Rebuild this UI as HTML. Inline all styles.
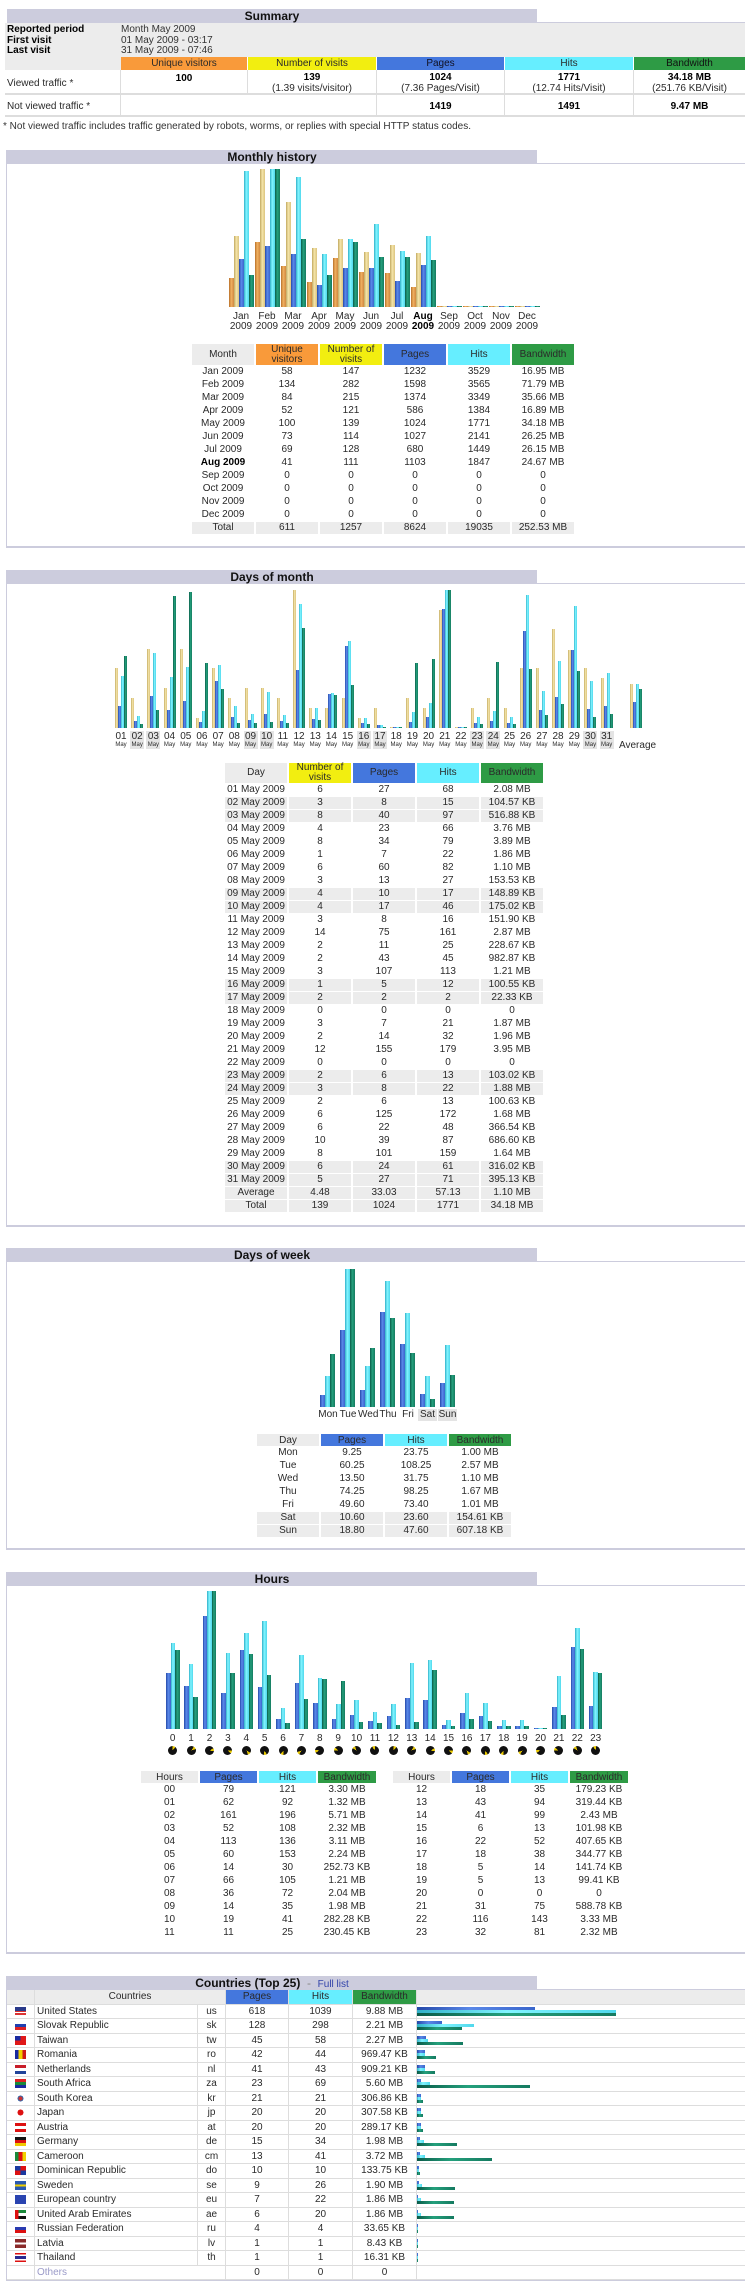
<!DOCTYPE html>
<html><head><meta charset="utf-8"><style>
*{margin:0;padding:0;box-sizing:border-box}
body{width:745px;height:2286px;position:relative;overflow:hidden;background:#fff;font-family:"Liberation Sans",sans-serif;font-size:10px;color:#2a2a2a}
.a{position:absolute}
.hd{position:absolute;left:7px;width:530px;height:14px;background:#CCCCDD;font-weight:bold;font-size:12px;line-height:14px;text-align:center;color:#111}
.box{position:absolute;left:6px;width:760px;border-left:1px solid #CCCCDD;border-bottom:2px solid #CCCCDD}
.hl{position:absolute;left:537px;width:210px;height:1px;background:#CCCCDD}
.ch{position:absolute;height:140px;display:flex;align-items:flex-end}
.ch div{display:flex;align-items:flex-end;flex:none}
.ch i{display:block;flex:none}
.u{background:linear-gradient(90deg,#b8702a,#f0b060 45%,#d08840)}
.v{background:linear-gradient(90deg,#c0a860,#f4e4a8 45%,#dcc480)}
.p{background:linear-gradient(90deg,#2448a8,#5a88e8 45%,#3a66cc)}
.h{background:linear-gradient(90deg,#30b0c8,#80f4ff 45%,#50d8ec)}
.k{background:linear-gradient(90deg,#0a5a48,#24a07c 45%,#157a60)}
.m i{width:5px}.d i{width:3px}.w i{width:5px}.hr i{width:4.5px}
table{position:absolute;border-collapse:separate;border-spacing:2px 1px}
td{padding:0;text-align:center;height:12px;line-height:12px;white-space:nowrap}
.g td,td.g{background:#ECECEC}
.cu{background:#F99A3A}.cv{background:#F2EE10}.cp{background:#4477DD}.chh{background:#66EEFF}.ck{background:#2E9B45}
.lab{position:absolute;display:flex;font-size:10px;text-align:center;line-height:10px}
.lab span{display:block;flex:none}
.sm{font-size:6px;line-height:7px;display:block}
.clk{width:9px;height:9px;border-radius:50%;margin:0 auto}
.ct td{border-right:1px solid #ddd;border-bottom:1px solid #ddd;height:14.5px;line-height:13px}
.fl{display:block;width:11px;height:9px;margin:0 auto}
</style></head><body>

<!-- SUMMARY -->
<div class="hd" style="top:9px">Summary</div>
<div class="hl" style="top:22px"></div>
<div class="a" style="left:5px;top:23px;width:740px;height:34px;background:#ECECEC"></div>
<div class="a" style="left:7px;top:25px;font-weight:bold;line-height:10.5px;color:#000">Reported period<br>First visit<br>Last visit</div>
<div class="a" style="left:121px;top:25px;line-height:10.5px;color:#333">Month May 2009<br>01 May 2009 - 03:17<br>31 May 2009 - 07:46</div>
<div class="a" style="left:5px;top:57px;width:116px;height:13px;background:#ECECEC"></div>
<div class="a cu" style="left:121px;top:57px;width:126px;height:13px;text-align:center;line-height:13px">Unique visitors</div>
<div class="a cv" style="left:248px;top:57px;width:128px;height:13px;text-align:center;line-height:13px">Number of visits</div>
<div class="a cp" style="left:377px;top:57px;width:127px;height:13px;text-align:center;line-height:13px;color:#112">Pages</div>
<div class="a chh" style="left:505px;top:57px;width:128px;height:13px;text-align:center;line-height:13px">Hits</div>
<div class="a ck" style="left:634px;top:57px;width:111px;height:13px;text-align:center;line-height:13px;color:#111">Bandwidth</div>
<div class="a" style="left:5px;top:70px;width:740px;height:47px;border-bottom:2px solid #ddd"></div>
<div class="a" style="left:5px;top:93px;width:740px;height:2px;background:#ddd"></div>
<div class="a" style="left:120px;top:70px;width:1px;height:47px;background:#ddd"></div>
<div class="a" style="left:376px;top:70px;width:1px;height:47px;background:#ddd"></div>
<div class="a" style="left:504px;top:70px;width:1px;height:47px;background:#ddd"></div>
<div class="a" style="left:633px;top:70px;width:1px;height:47px;background:#ddd"></div>
<div class="a" style="left:247px;top:70px;width:1px;height:23px;background:#ddd"></div>
<div class="a" style="left:7px;top:78px">Viewed traffic *</div>
<div class="a" style="left:7px;top:101px">Not viewed traffic *</div>
<div class="a" style="left:121px;top:73px;width:126px;text-align:center;font-weight:bold;color:#000">100</div>
<div class="a" style="left:248px;top:73px;width:128px;text-align:center;line-height:10.5px"><b style="color:#000">139</b><br>(1.39 visits/visitor)</div>
<div class="a" style="left:377px;top:73px;width:127px;text-align:center;line-height:10.5px"><b style="color:#000">1024</b><br>(7.36 Pages/Visit)</div>
<div class="a" style="left:505px;top:73px;width:128px;text-align:center;line-height:10.5px"><b style="color:#000">1771</b><br>(12.74 Hits/Visit)</div>
<div class="a" style="left:634px;top:73px;width:111px;text-align:center;line-height:10.5px"><b style="color:#000">34.18 MB</b><br>(251.76 KB/Visit)</div>
<div class="a" style="left:377px;top:101px;width:127px;text-align:center;font-weight:bold;color:#000">1419</div>
<div class="a" style="left:505px;top:101px;width:128px;text-align:center;font-weight:bold;color:#000">1491</div>
<div class="a" style="left:634px;top:101px;width:111px;text-align:center;font-weight:bold;color:#000">9.47 MB</div>
<div class="a" style="left:3px;top:121px;color:#333">* Not viewed traffic includes traffic generated by robots, worms, or replies with special HTTP status codes.</div>

<!-- MONTHLY -->
<div class="box" style="top:150px;height:398px"></div>
<div class="hd" style="top:150px">Monthly history</div>
<div class="hl" style="top:163px"></div>
<div class="ch m" style="left:229px;top:167px">
<div style="width:26px"><i class="u" style="height:29px"></i><i class="v" style="height:71px"></i><i class="p" style="height:48px"></i><i class="h" style="height:136px"></i><i class="k" style="height:32px"></i></div>
<div style="width:26px"><i class="u" style="height:65px"></i><i class="v" style="height:138px"></i><i class="p" style="height:61px"></i><i class="h" style="height:138px"></i><i class="k" style="height:138px"></i></div>
<div style="width:26px"><i class="u" style="height:41px"></i><i class="v" style="height:105px"></i><i class="p" style="height:53px"></i><i class="h" style="height:130px"></i><i class="k" style="height:68px"></i></div>
<div style="width:26px"><i class="u" style="height:25px"></i><i class="v" style="height:59px"></i><i class="p" style="height:22px"></i><i class="h" style="height:53px"></i><i class="k" style="height:32px"></i></div>
<div style="width:26px"><i class="u" style="height:49px"></i><i class="v" style="height:68px"></i><i class="p" style="height:39px"></i><i class="h" style="height:68px"></i><i class="k" style="height:65px"></i></div>
<div style="width:26px"><i class="u" style="height:35px"></i><i class="v" style="height:55px"></i><i class="p" style="height:39px"></i><i class="h" style="height:83px"></i><i class="k" style="height:50px"></i></div>
<div style="width:26px"><i class="u" style="height:34px"></i><i class="v" style="height:62px"></i><i class="p" style="height:26px"></i><i class="h" style="height:56px"></i><i class="k" style="height:50px"></i></div>
<div style="width:26px"><i class="u" style="height:20px"></i><i class="v" style="height:54px"></i><i class="p" style="height:42px"></i><i class="h" style="height:71px"></i><i class="k" style="height:47px"></i></div>
<div style="width:26px"><i class="u" style="height:1px"></i><i class="v" style="height:1px"></i><i class="p" style="height:1px"></i><i class="h" style="height:1px"></i><i class="k" style="height:1px"></i></div>
<div style="width:26px"><i class="u" style="height:1px"></i><i class="v" style="height:1px"></i><i class="p" style="height:1px"></i><i class="h" style="height:1px"></i><i class="k" style="height:1px"></i></div>
<div style="width:26px"><i class="u" style="height:1px"></i><i class="v" style="height:1px"></i><i class="p" style="height:1px"></i><i class="h" style="height:1px"></i><i class="k" style="height:1px"></i></div>
<div style="width:26px"><i class="u" style="height:1px"></i><i class="v" style="height:1px"></i><i class="p" style="height:1px"></i><i class="h" style="height:1px"></i><i class="k" style="height:1px"></i></div>
</div>
<div class="lab" style="left:228px;top:312px">
<span style="width:26px">Jan<br>2009</span><span style="width:26px">Feb<br>2009</span><span style="width:26px">Mar<br>2009</span><span style="width:26px">Apr<br>2009</span><span style="width:26px">May<br>2009</span><span style="width:26px">Jun<br>2009</span><span style="width:26px">Jul<br>2009</span><span style="width:26px;font-weight:bold;color:#000">Aug<br>2009</span><span style="width:26px">Sep<br>2009</span><span style="width:26px">Oct<br>2009</span><span style="width:26px">Nov<br>2009</span><span style="width:26px">Dec<br>2009</span>
</div>
<table style="left:190px;top:343px">
<tr><td class="g" style="width:62px;height:21px">Month</td><td class="cu" style="width:62px;line-height:10px">Unique<br>visitors</td><td class="cv" style="width:62px;line-height:10px">Number of<br>visits</td><td class="cp" style="width:62px">Pages</td><td class="chh" style="width:62px">Hits</td><td class="ck" style="width:62px">Bandwidth</td></tr>
<tr><td>Jan 2009</td><td>58</td><td>147</td><td>1232</td><td>3529</td><td>16.95 MB</td></tr>
<tr><td>Feb 2009</td><td>134</td><td>282</td><td>1598</td><td>3565</td><td>71.79 MB</td></tr>
<tr><td>Mar 2009</td><td>84</td><td>215</td><td>1374</td><td>3349</td><td>35.66 MB</td></tr>
<tr><td>Apr 2009</td><td>52</td><td>121</td><td>586</td><td>1384</td><td>16.89 MB</td></tr>
<tr><td>May 2009</td><td>100</td><td>139</td><td>1024</td><td>1771</td><td>34.18 MB</td></tr>
<tr><td>Jun 2009</td><td>73</td><td>114</td><td>1027</td><td>2141</td><td>26.25 MB</td></tr>
<tr><td>Jul 2009</td><td>69</td><td>128</td><td>680</td><td>1449</td><td>26.15 MB</td></tr>
<tr><td style="font-weight:bold;color:#000">Aug 2009</td><td>41</td><td>111</td><td>1103</td><td>1847</td><td>24.67 MB</td></tr>
<tr><td>Sep 2009</td><td>0</td><td>0</td><td>0</td><td>0</td><td>0</td></tr>
<tr><td>Oct 2009</td><td>0</td><td>0</td><td>0</td><td>0</td><td>0</td></tr>
<tr><td>Nov 2009</td><td>0</td><td>0</td><td>0</td><td>0</td><td>0</td></tr>
<tr><td>Dec 2009</td><td>0</td><td>0</td><td>0</td><td>0</td><td>0</td></tr>
<tr class="g"><td>Total</td><td>611</td><td>1257</td><td>8624</td><td>19035</td><td>252.53 MB</td></tr>
</table>

<!-- DAYS OF MONTH -->
<div class="box" style="top:570px;height:657px"></div>
<div class="hd" style="top:570px">Days of month</div>
<div class="hl" style="top:583px"></div>
<div class="ch d" style="left:115px;top:588px">
<div style="width:16.2px"><i class="v" style="height:60px"></i><i class="p" style="height:22px"></i><i class="h" style="height:52px"></i><i class="k" style="height:72px"></i></div>
<div style="width:16.2px"><i class="v" style="height:30px"></i><i class="p" style="height:7px"></i><i class="h" style="height:12px"></i><i class="k" style="height:4px"></i></div>
<div style="width:16.2px"><i class="v" style="height:79px"></i><i class="p" style="height:32px"></i><i class="h" style="height:75px"></i><i class="k" style="height:18px"></i></div>
<div style="width:16.2px"><i class="v" style="height:40px"></i><i class="p" style="height:18px"></i><i class="h" style="height:51px"></i><i class="k" style="height:132px"></i></div>
<div style="width:16.2px"><i class="v" style="height:79px"></i><i class="p" style="height:27px"></i><i class="h" style="height:61px"></i><i class="k" style="height:136px"></i></div>
<div style="width:16.2px"><i class="v" style="height:10px"></i><i class="p" style="height:6px"></i><i class="h" style="height:17px"></i><i class="k" style="height:65px"></i></div>
<div style="width:16.2px"><i class="v" style="height:60px"></i><i class="p" style="height:47px"></i><i class="h" style="height:63px"></i><i class="k" style="height:39px"></i></div>
<div style="width:16.2px"><i class="v" style="height:30px"></i><i class="p" style="height:11px"></i><i class="h" style="height:22px"></i><i class="k" style="height:5px"></i></div>
<div style="width:16.2px"><i class="v" style="height:40px"></i><i class="p" style="height:8px"></i><i class="h" style="height:14px"></i><i class="k" style="height:5px"></i></div>
<div style="width:16.2px"><i class="v" style="height:40px"></i><i class="p" style="height:14px"></i><i class="h" style="height:36px"></i><i class="k" style="height:6px"></i></div>
<div style="width:16.2px"><i class="v" style="height:30px"></i><i class="p" style="height:7px"></i><i class="h" style="height:13px"></i><i class="k" style="height:5px"></i></div>
<div style="width:16.2px"><i class="v" style="height:138px"></i><i class="p" style="height:58px"></i><i class="h" style="height:124px"></i><i class="k" style="height:100px"></i></div>
<div style="width:16.2px"><i class="v" style="height:20px"></i><i class="p" style="height:9px"></i><i class="h" style="height:20px"></i><i class="k" style="height:8px"></i></div>
<div style="width:16.2px"><i class="v" style="height:20px"></i><i class="p" style="height:34px"></i><i class="h" style="height:35px"></i><i class="k" style="height:33px"></i></div>
<div style="width:16.2px"><i class="v" style="height:30px"></i><i class="p" style="height:82px"></i><i class="h" style="height:87px"></i><i class="k" style="height:43px"></i></div>
<div style="width:16.2px"><i class="v" style="height:10px"></i><i class="p" style="height:5px"></i><i class="h" style="height:10px"></i><i class="k" style="height:4px"></i></div>
<div style="width:16.2px"><i class="v" style="height:20px"></i><i class="p" style="height:3px"></i><i class="h" style="height:3px"></i><i class="k" style="height:1px"></i></div>
<div style="width:16.2px"><i class="v" style="height:1px"></i><i class="p" style="height:1px"></i><i class="h" style="height:1px"></i><i class="k" style="height:1px"></i></div>
<div style="width:16.2px"><i class="v" style="height:30px"></i><i class="p" style="height:6px"></i><i class="h" style="height:16px"></i><i class="k" style="height:65px"></i></div>
<div style="width:16.2px"><i class="v" style="height:20px"></i><i class="p" style="height:11px"></i><i class="h" style="height:25px"></i><i class="k" style="height:69px"></i></div>
<div style="width:16.2px"><i class="v" style="height:118px"></i><i class="p" style="height:119px"></i><i class="h" style="height:138px"></i><i class="k" style="height:138px"></i></div>
<div style="width:16.2px"><i class="v" style="height:1px"></i><i class="p" style="height:1px"></i><i class="h" style="height:1px"></i><i class="k" style="height:1px"></i></div>
<div style="width:16.2px"><i class="v" style="height:20px"></i><i class="p" style="height:5px"></i><i class="h" style="height:11px"></i><i class="k" style="height:4px"></i></div>
<div style="width:16.2px"><i class="v" style="height:30px"></i><i class="p" style="height:7px"></i><i class="h" style="height:17px"></i><i class="k" style="height:66px"></i></div>
<div style="width:16.2px"><i class="v" style="height:20px"></i><i class="p" style="height:5px"></i><i class="h" style="height:11px"></i><i class="k" style="height:4px"></i></div>
<div style="width:16.2px"><i class="v" style="height:60px"></i><i class="p" style="height:97px"></i><i class="h" style="height:133px"></i><i class="k" style="height:59px"></i></div>
<div style="width:16.2px"><i class="v" style="height:60px"></i><i class="p" style="height:18px"></i><i class="h" style="height:37px"></i><i class="k" style="height:13px"></i></div>
<div style="width:16.2px"><i class="v" style="height:99px"></i><i class="p" style="height:31px"></i><i class="h" style="height:67px"></i><i class="k" style="height:24px"></i></div>
<div style="width:16.2px"><i class="v" style="height:78px"></i><i class="p" style="height:78px"></i><i class="h" style="height:122px"></i><i class="k" style="height:57px"></i></div>
<div style="width:16.2px"><i class="v" style="height:60px"></i><i class="p" style="height:19px"></i><i class="h" style="height:47px"></i><i class="k" style="height:11px"></i></div>
<div style="width:16.2px"><i class="v" style="height:50px"></i><i class="p" style="height:22px"></i><i class="h" style="height:55px"></i><i class="k" style="height:14px"></i></div>
<div style="width:16.2px;margin-left:13px"><i class="v" style="height:44px"></i><i class="p" style="height:26px"></i><i class="h" style="height:44px"></i><i class="k" style="height:39px"></i></div>
</div>
<div class="lab" style="left:114px;top:731px;line-height:11px">
<span style="width:16.2px"><span style="width:14px">01<b class="sm" style="font-weight:normal">May</b></span></span>
<span style="width:16.2px"><span style="width:14px;background:#e4e4e4">02<b class="sm" style="font-weight:normal">May</b></span></span>
<span style="width:16.2px"><span style="width:14px;background:#e4e4e4">03<b class="sm" style="font-weight:normal">May</b></span></span>
<span style="width:16.2px"><span style="width:14px">04<b class="sm" style="font-weight:normal">May</b></span></span>
<span style="width:16.2px"><span style="width:14px">05<b class="sm" style="font-weight:normal">May</b></span></span>
<span style="width:16.2px"><span style="width:14px">06<b class="sm" style="font-weight:normal">May</b></span></span>
<span style="width:16.2px"><span style="width:14px">07<b class="sm" style="font-weight:normal">May</b></span></span>
<span style="width:16.2px"><span style="width:14px">08<b class="sm" style="font-weight:normal">May</b></span></span>
<span style="width:16.2px"><span style="width:14px;background:#e4e4e4">09<b class="sm" style="font-weight:normal">May</b></span></span>
<span style="width:16.2px"><span style="width:14px;background:#e4e4e4">10<b class="sm" style="font-weight:normal">May</b></span></span>
<span style="width:16.2px"><span style="width:14px">11<b class="sm" style="font-weight:normal">May</b></span></span>
<span style="width:16.2px"><span style="width:14px">12<b class="sm" style="font-weight:normal">May</b></span></span>
<span style="width:16.2px"><span style="width:14px">13<b class="sm" style="font-weight:normal">May</b></span></span>
<span style="width:16.2px"><span style="width:14px">14<b class="sm" style="font-weight:normal">May</b></span></span>
<span style="width:16.2px"><span style="width:14px">15<b class="sm" style="font-weight:normal">May</b></span></span>
<span style="width:16.2px"><span style="width:14px;background:#e4e4e4">16<b class="sm" style="font-weight:normal">May</b></span></span>
<span style="width:16.2px"><span style="width:14px;background:#e4e4e4">17<b class="sm" style="font-weight:normal">May</b></span></span>
<span style="width:16.2px"><span style="width:14px">18<b class="sm" style="font-weight:normal">May</b></span></span>
<span style="width:16.2px"><span style="width:14px">19<b class="sm" style="font-weight:normal">May</b></span></span>
<span style="width:16.2px"><span style="width:14px">20<b class="sm" style="font-weight:normal">May</b></span></span>
<span style="width:16.2px"><span style="width:14px">21<b class="sm" style="font-weight:normal">May</b></span></span>
<span style="width:16.2px"><span style="width:14px">22<b class="sm" style="font-weight:normal">May</b></span></span>
<span style="width:16.2px"><span style="width:14px;background:#e4e4e4">23<b class="sm" style="font-weight:normal">May</b></span></span>
<span style="width:16.2px"><span style="width:14px;background:#e4e4e4">24<b class="sm" style="font-weight:normal">May</b></span></span>
<span style="width:16.2px"><span style="width:14px">25<b class="sm" style="font-weight:normal">May</b></span></span>
<span style="width:16.2px"><span style="width:14px">26<b class="sm" style="font-weight:normal">May</b></span></span>
<span style="width:16.2px"><span style="width:14px">27<b class="sm" style="font-weight:normal">May</b></span></span>
<span style="width:16.2px"><span style="width:14px">28<b class="sm" style="font-weight:normal">May</b></span></span>
<span style="width:16.2px"><span style="width:14px">29<b class="sm" style="font-weight:normal">May</b></span></span>
<span style="width:16.2px"><span style="width:14px;background:#e4e4e4">30<b class="sm" style="font-weight:normal">May</b></span></span>
<span style="width:16.2px"><span style="width:14px;background:#e4e4e4">31<b class="sm" style="font-weight:normal">May</b></span></span>
</div>
<div class="a" style="left:619px;top:740px">Average</div>
<table style="left:223px;top:762px">
<tr><td class="g" style="width:62px;height:20px">Day</td><td class="cv" style="width:62px;line-height:10px">Number of<br>visits</td><td class="cp" style="width:62px">Pages</td><td class="chh" style="width:62px">Hits</td><td class="ck" style="width:62px">Bandwidth</td></tr>
<tr><td>01 May 2009</td><td>6</td><td>27</td><td>68</td><td>2.08 MB</td></tr>
<tr class="g"><td>02 May 2009</td><td>3</td><td>8</td><td>15</td><td>104.57 KB</td></tr>
<tr class="g"><td>03 May 2009</td><td>8</td><td>40</td><td>97</td><td>516.88 KB</td></tr>
<tr><td>04 May 2009</td><td>4</td><td>23</td><td>66</td><td>3.76 MB</td></tr>
<tr><td>05 May 2009</td><td>8</td><td>34</td><td>79</td><td>3.89 MB</td></tr>
<tr><td>06 May 2009</td><td>1</td><td>7</td><td>22</td><td>1.86 MB</td></tr>
<tr><td>07 May 2009</td><td>6</td><td>60</td><td>82</td><td>1.10 MB</td></tr>
<tr><td>08 May 2009</td><td>3</td><td>13</td><td>27</td><td>153.53 KB</td></tr>
<tr class="g"><td>09 May 2009</td><td>4</td><td>10</td><td>17</td><td>148.89 KB</td></tr>
<tr class="g"><td>10 May 2009</td><td>4</td><td>17</td><td>46</td><td>175.02 KB</td></tr>
<tr><td>11 May 2009</td><td>3</td><td>8</td><td>16</td><td>151.90 KB</td></tr>
<tr><td>12 May 2009</td><td>14</td><td>75</td><td>161</td><td>2.87 MB</td></tr>
<tr><td>13 May 2009</td><td>2</td><td>11</td><td>25</td><td>228.67 KB</td></tr>
<tr><td>14 May 2009</td><td>2</td><td>43</td><td>45</td><td>982.87 KB</td></tr>
<tr><td>15 May 2009</td><td>3</td><td>107</td><td>113</td><td>1.21 MB</td></tr>
<tr class="g"><td>16 May 2009</td><td>1</td><td>5</td><td>12</td><td>100.55 KB</td></tr>
<tr class="g"><td>17 May 2009</td><td>2</td><td>2</td><td>2</td><td>22.33 KB</td></tr>
<tr><td>18 May 2009</td><td>0</td><td>0</td><td>0</td><td>0</td></tr>
<tr><td>19 May 2009</td><td>3</td><td>7</td><td>21</td><td>1.87 MB</td></tr>
<tr><td>20 May 2009</td><td>2</td><td>14</td><td>32</td><td>1.96 MB</td></tr>
<tr><td>21 May 2009</td><td>12</td><td>155</td><td>179</td><td>3.95 MB</td></tr>
<tr><td>22 May 2009</td><td>0</td><td>0</td><td>0</td><td>0</td></tr>
<tr class="g"><td>23 May 2009</td><td>2</td><td>6</td><td>13</td><td>103.02 KB</td></tr>
<tr class="g"><td>24 May 2009</td><td>3</td><td>8</td><td>22</td><td>1.88 MB</td></tr>
<tr><td>25 May 2009</td><td>2</td><td>6</td><td>13</td><td>100.63 KB</td></tr>
<tr><td>26 May 2009</td><td>6</td><td>125</td><td>172</td><td>1.68 MB</td></tr>
<tr><td>27 May 2009</td><td>6</td><td>22</td><td>48</td><td>366.54 KB</td></tr>
<tr><td>28 May 2009</td><td>10</td><td>39</td><td>87</td><td>686.60 KB</td></tr>
<tr><td>29 May 2009</td><td>8</td><td>101</td><td>159</td><td>1.64 MB</td></tr>
<tr class="g"><td>30 May 2009</td><td>6</td><td>24</td><td>61</td><td>316.02 KB</td></tr>
<tr class="g"><td>31 May 2009</td><td>5</td><td>27</td><td>71</td><td>395.13 KB</td></tr>
<tr class="g"><td>Average</td><td>4.48</td><td>33.03</td><td>57.13</td><td>1.10 MB</td></tr>
<tr class="g"><td>Total</td><td>139</td><td>1024</td><td>1771</td><td>34.18 MB</td></tr>
</table>

<!-- DAYS OF WEEK -->
<div class="box" style="top:1248px;height:302px"></div>
<div class="hd" style="top:1248px">Days of week</div>
<div class="hl" style="top:1261px"></div>
<div class="ch w" style="left:320px;top:1267px">
<div style="width:20px"><i class="p" style="height:12px"></i><i class="h" style="height:31px"></i><i class="k" style="height:53px"></i></div>
<div style="width:20px"><i class="p" style="height:77px"></i><i class="h" style="height:138px"></i><i class="k" style="height:138px"></i></div>
<div style="width:20px"><i class="p" style="height:17px"></i><i class="h" style="height:41px"></i><i class="k" style="height:59px"></i></div>
<div style="width:20px"><i class="p" style="height:95px"></i><i class="h" style="height:126px"></i><i class="k" style="height:89px"></i></div>
<div style="width:20px"><i class="p" style="height:63px"></i><i class="h" style="height:94px"></i><i class="k" style="height:54px"></i></div>
<div style="width:20px"><i class="p" style="height:13px"></i><i class="h" style="height:31px"></i><i class="k" style="height:8px"></i></div>
<div style="width:20px"><i class="p" style="height:24px"></i><i class="h" style="height:62px"></i><i class="k" style="height:32px"></i></div>
</div>
<div class="lab" style="left:318px;top:1409px;line-height:12px">
<span style="width:20px">Mon</span><span style="width:20px">Tue</span><span style="width:20px">Wed</span><span style="width:20px">Thu</span><span style="width:20px">Fri</span><span style="width:19px;background:#e4e4e4;margin-right:1px">Sat</span><span style="width:19px;background:#e4e4e4">Sun</span>
</div>
<table style="left:255px;top:1433px">
<tr><td class="g" style="width:62px;height:11px;line-height:11px">Day</td><td class="cp" style="width:62px;line-height:11px">Pages</td><td class="chh" style="width:62px;line-height:11px">Hits</td><td class="ck" style="width:62px;line-height:11px">Bandwidth</td></tr>
<tr><td>Mon</td><td>9.25</td><td>23.75</td><td>1.00 MB</td></tr>
<tr><td>Tue</td><td>60.25</td><td>108.25</td><td>2.57 MB</td></tr>
<tr><td>Wed</td><td>13.50</td><td>31.75</td><td>1.10 MB</td></tr>
<tr><td>Thu</td><td>74.25</td><td>98.25</td><td>1.67 MB</td></tr>
<tr><td>Fri</td><td>49.60</td><td>73.40</td><td>1.01 MB</td></tr>
<tr class="g"><td>Sat</td><td>10.60</td><td>23.60</td><td>154.61 KB</td></tr>
<tr class="g"><td>Sun</td><td>18.80</td><td>47.60</td><td>607.18 KB</td></tr>
</table>

<!-- HOURS -->
<div class="box" style="top:1572px;height:382px"></div>
<div class="hd" style="top:1572px">Hours</div>
<div class="hl" style="top:1585px"></div>
<div class="ch hr" style="left:166px;top:1589px">
<div style="width:18.4px"><i class="p" style="height:56px"></i><i class="h" style="height:86px"></i><i class="k" style="height:79px"></i></div>
<div style="width:18.4px"><i class="p" style="height:43px"></i><i class="h" style="height:65px"></i><i class="k" style="height:32px"></i></div>
<div style="width:18.4px"><i class="p" style="height:113px"></i><i class="h" style="height:138px"></i><i class="k" style="height:138px"></i></div>
<div style="width:18.4px"><i class="p" style="height:36px"></i><i class="h" style="height:76px"></i><i class="k" style="height:56px"></i></div>
<div style="width:18.4px"><i class="p" style="height:79px"></i><i class="h" style="height:96px"></i><i class="k" style="height:75px"></i></div>
<div style="width:18.4px"><i class="p" style="height:42px"></i><i class="h" style="height:108px"></i><i class="k" style="height:54px"></i></div>
<div style="width:18.4px"><i class="p" style="height:10px"></i><i class="h" style="height:21px"></i><i class="k" style="height:6px"></i></div>
<div style="width:18.4px"><i class="p" style="height:46px"></i><i class="h" style="height:74px"></i><i class="k" style="height:30px"></i></div>
<div style="width:18.4px"><i class="p" style="height:26px"></i><i class="h" style="height:51px"></i><i class="k" style="height:50px"></i></div>
<div style="width:18.4px"><i class="p" style="height:10px"></i><i class="h" style="height:25px"></i><i class="k" style="height:48px"></i></div>
<div style="width:18.4px"><i class="p" style="height:14px"></i><i class="h" style="height:29px"></i><i class="k" style="height:7px"></i></div>
<div style="width:18.4px"><i class="p" style="height:8px"></i><i class="h" style="height:17px"></i><i class="k" style="height:6px"></i></div>
<div style="width:18.4px"><i class="p" style="height:13px"></i><i class="h" style="height:25px"></i><i class="k" style="height:4px"></i></div>
<div style="width:18.4px"><i class="p" style="height:31px"></i><i class="h" style="height:66px"></i><i class="k" style="height:7px"></i></div>
<div style="width:18.4px"><i class="p" style="height:29px"></i><i class="h" style="height:69px"></i><i class="k" style="height:59px"></i></div>
<div style="width:18.4px"><i class="p" style="height:4px"></i><i class="h" style="height:9px"></i><i class="k" style="height:3px"></i></div>
<div style="width:18.4px"><i class="p" style="height:16px"></i><i class="h" style="height:36px"></i><i class="k" style="height:10px"></i></div>
<div style="width:18.4px"><i class="p" style="height:13px"></i><i class="h" style="height:26px"></i><i class="k" style="height:8px"></i></div>
<div style="width:18.4px"><i class="p" style="height:3px"></i><i class="h" style="height:9px"></i><i class="k" style="height:3px"></i></div>
<div style="width:18.4px"><i class="p" style="height:3px"></i><i class="h" style="height:9px"></i><i class="k" style="height:3px"></i></div>
<div style="width:18.4px"><i class="p" style="height:1px"></i><i class="h" style="height:1px"></i><i class="k" style="height:1px"></i></div>
<div style="width:18.4px"><i class="p" style="height:22px"></i><i class="h" style="height:53px"></i><i class="k" style="height:14px"></i></div>
<div style="width:18.4px"><i class="p" style="height:82px"></i><i class="h" style="height:101px"></i><i class="k" style="height:80px"></i></div>
<div style="width:18.4px"><i class="p" style="height:23px"></i><i class="h" style="height:57px"></i><i class="k" style="height:56px"></i></div>
</div>
<div class="lab" style="left:166px;top:1733px;line-height:11px">
<span style="width:18.4px;padding-right:5px">0</span><span style="width:18.4px;padding-right:5px">1</span><span style="width:18.4px;padding-right:5px">2</span><span style="width:18.4px;padding-right:5px">3</span><span style="width:18.4px;padding-right:5px">4</span><span style="width:18.4px;padding-right:5px">5</span><span style="width:18.4px;padding-right:5px">6</span><span style="width:18.4px;padding-right:5px">7</span><span style="width:18.4px;padding-right:5px">8</span><span style="width:18.4px;padding-right:5px">9</span><span style="width:18.4px;padding-right:5px">10</span><span style="width:18.4px;padding-right:5px">11</span><span style="width:18.4px;padding-right:5px">12</span><span style="width:18.4px;padding-right:5px">13</span><span style="width:18.4px;padding-right:5px">14</span><span style="width:18.4px;padding-right:5px">15</span><span style="width:18.4px;padding-right:5px">16</span><span style="width:18.4px;padding-right:5px">17</span><span style="width:18.4px;padding-right:5px">18</span><span style="width:18.4px;padding-right:5px">19</span><span style="width:18.4px;padding-right:5px">20</span><span style="width:18.4px;padding-right:5px">21</span><span style="width:18.4px;padding-right:5px">22</span><span style="width:18.4px;padding-right:5px">23</span>
</div>
<div class="lab" style="left:166px;top:1746px">
<span style="width:18.4px;padding-right:5px"><i class="clk" style="display:block;background:conic-gradient(from 0deg,#e8c800 0 40deg,#111 40deg)"></i></span>
<span style="width:18.4px;padding-right:5px"><i class="clk" style="display:block;background:conic-gradient(from 30deg,#e8c800 0 40deg,#111 40deg)"></i></span>
<span style="width:18.4px;padding-right:5px"><i class="clk" style="display:block;background:conic-gradient(from 60deg,#e8c800 0 40deg,#111 40deg)"></i></span>
<span style="width:18.4px;padding-right:5px"><i class="clk" style="display:block;background:conic-gradient(from 90deg,#e8c800 0 40deg,#111 40deg)"></i></span>
<span style="width:18.4px;padding-right:5px"><i class="clk" style="display:block;background:conic-gradient(from 120deg,#e8c800 0 40deg,#111 40deg)"></i></span>
<span style="width:18.4px;padding-right:5px"><i class="clk" style="display:block;background:conic-gradient(from 150deg,#e8c800 0 40deg,#111 40deg)"></i></span>
<span style="width:18.4px;padding-right:5px"><i class="clk" style="display:block;background:conic-gradient(from 180deg,#e8c800 0 40deg,#111 40deg)"></i></span>
<span style="width:18.4px;padding-right:5px"><i class="clk" style="display:block;background:conic-gradient(from 210deg,#e8c800 0 40deg,#111 40deg)"></i></span>
<span style="width:18.4px;padding-right:5px"><i class="clk" style="display:block;background:conic-gradient(from 240deg,#e8c800 0 40deg,#111 40deg)"></i></span>
<span style="width:18.4px;padding-right:5px"><i class="clk" style="display:block;background:conic-gradient(from 270deg,#e8c800 0 40deg,#111 40deg)"></i></span>
<span style="width:18.4px;padding-right:5px"><i class="clk" style="display:block;background:conic-gradient(from 300deg,#e8c800 0 40deg,#111 40deg)"></i></span>
<span style="width:18.4px;padding-right:5px"><i class="clk" style="display:block;background:conic-gradient(from 330deg,#e8c800 0 40deg,#111 40deg)"></i></span>
<span style="width:18.4px;padding-right:5px"><i class="clk" style="display:block;background:conic-gradient(from 0deg,#e8c800 0 40deg,#111 40deg)"></i></span>
<span style="width:18.4px;padding-right:5px"><i class="clk" style="display:block;background:conic-gradient(from 30deg,#e8c800 0 40deg,#111 40deg)"></i></span>
<span style="width:18.4px;padding-right:5px"><i class="clk" style="display:block;background:conic-gradient(from 60deg,#e8c800 0 40deg,#111 40deg)"></i></span>
<span style="width:18.4px;padding-right:5px"><i class="clk" style="display:block;background:conic-gradient(from 90deg,#e8c800 0 40deg,#111 40deg)"></i></span>
<span style="width:18.4px;padding-right:5px"><i class="clk" style="display:block;background:conic-gradient(from 120deg,#e8c800 0 40deg,#111 40deg)"></i></span>
<span style="width:18.4px;padding-right:5px"><i class="clk" style="display:block;background:conic-gradient(from 150deg,#e8c800 0 40deg,#111 40deg)"></i></span>
<span style="width:18.4px;padding-right:5px"><i class="clk" style="display:block;background:conic-gradient(from 180deg,#e8c800 0 40deg,#111 40deg)"></i></span>
<span style="width:18.4px;padding-right:5px"><i class="clk" style="display:block;background:conic-gradient(from 210deg,#e8c800 0 40deg,#111 40deg)"></i></span>
<span style="width:18.4px;padding-right:5px"><i class="clk" style="display:block;background:conic-gradient(from 240deg,#e8c800 0 40deg,#111 40deg)"></i></span>
<span style="width:18.4px;padding-right:5px"><i class="clk" style="display:block;background:conic-gradient(from 270deg,#e8c800 0 40deg,#111 40deg)"></i></span>
<span style="width:18.4px;padding-right:5px"><i class="clk" style="display:block;background:conic-gradient(from 300deg,#e8c800 0 40deg,#111 40deg)"></i></span>
<span style="width:18.4px;padding-right:5px"><i class="clk" style="display:block;background:conic-gradient(from 330deg,#e8c800 0 40deg,#111 40deg)"></i></span>
</div>
<table style="left:139px;top:1770px">
<tr><td class="g" style="width:57px;height:11px;line-height:11px">Hours</td><td class="cp" style="width:57px;line-height:11px">Pages</td><td class="chh" style="width:57px;line-height:11px">Hits</td><td class="ck" style="width:58px;line-height:11px">Bandwidth</td></tr>
<tr><td>00</td><td>79</td><td>121</td><td>3.30 MB</td></tr>
<tr><td>01</td><td>62</td><td>92</td><td>1.32 MB</td></tr>
<tr><td>02</td><td>161</td><td>196</td><td>5.71 MB</td></tr>
<tr><td>03</td><td>52</td><td>108</td><td>2.32 MB</td></tr>
<tr><td>04</td><td>113</td><td>136</td><td>3.11 MB</td></tr>
<tr><td>05</td><td>60</td><td>153</td><td>2.24 MB</td></tr>
<tr><td>06</td><td>14</td><td>30</td><td>252.73 KB</td></tr>
<tr><td>07</td><td>66</td><td>105</td><td>1.21 MB</td></tr>
<tr><td>08</td><td>36</td><td>72</td><td>2.04 MB</td></tr>
<tr><td>09</td><td>14</td><td>35</td><td>1.98 MB</td></tr>
<tr><td>10</td><td>19</td><td>41</td><td>282.28 KB</td></tr>
<tr><td>11</td><td>11</td><td>25</td><td>230.45 KB</td></tr>
</table>
<table style="left:391px;top:1770px">
<tr><td class="g" style="width:57px;height:11px;line-height:11px">Hours</td><td class="cp" style="width:57px;line-height:11px">Pages</td><td class="chh" style="width:57px;line-height:11px">Hits</td><td class="ck" style="width:58px;line-height:11px">Bandwidth</td></tr>
<tr><td>12</td><td>18</td><td>35</td><td>179.23 KB</td></tr>
<tr><td>13</td><td>43</td><td>94</td><td>319.44 KB</td></tr>
<tr><td>14</td><td>41</td><td>99</td><td>2.43 MB</td></tr>
<tr><td>15</td><td>6</td><td>13</td><td>101.98 KB</td></tr>
<tr><td>16</td><td>22</td><td>52</td><td>407.65 KB</td></tr>
<tr><td>17</td><td>18</td><td>38</td><td>344.77 KB</td></tr>
<tr><td>18</td><td>5</td><td>14</td><td>141.74 KB</td></tr>
<tr><td>19</td><td>5</td><td>13</td><td>99.41 KB</td></tr>
<tr><td>20</td><td>0</td><td>0</td><td>0</td></tr>
<tr><td>21</td><td>31</td><td>75</td><td>588.78 KB</td></tr>
<tr><td>22</td><td>116</td><td>143</td><td>3.33 MB</td></tr>
<tr><td>23</td><td>32</td><td>81</td><td>2.32 MB</td></tr>
</table>

<!-- COUNTRIES -->
<div class="box" style="top:1976px;height:305px"></div>
<div class="hd" style="top:1976px">Countries (Top 25) &nbsp;<span style="color:#888;font-weight:normal">-</span>&nbsp; <span style="color:#3344aa;font-weight:normal;font-size:10px">Full list</span></div>
<div class="hl" style="top:1989px"></div>
<table class="ct" style="left:7px;top:1990px;border-spacing:0;width:740px">
<tr><td class="g" style="width:28px;height:14px;line-height:13px"></td><td class="g" colspan="2" style="width:191px">Countries</td><td class="cp" style="width:63px">Pages</td><td class="chh" style="width:64px">Hits</td><td class="ck" style="width:64px">Bandwidth</td><td class="g"></td></tr>
<tr><td><i class="fl" style="background:linear-gradient(#2a3a8a 0 45%,transparent 45%),repeating-linear-gradient(#d33 0 2px,#fff 2px 3px)"></i></td><td style="text-align:left;padding-left:2px;width:163px">United States</td><td style="width:28px">us</td><td>618</td><td>1039</td><td>9.88 MB</td><td style="text-align:left"><i style="display:block;height:3px;width:118px" class="p"></i><i style="display:block;height:3px;width:199px" class="h"></i><i style="display:block;height:3px;width:199px" class="k"></i></td></tr>
<tr><td><i class="fl" style="background:linear-gradient(#fff 0 33%,#2040b0 33% 66%,#d22 66%)"></i></td><td style="text-align:left;padding-left:2px">Slovak Republic</td><td>sk</td><td>128</td><td>298</td><td>2.21 MB</td><td style="text-align:left"><i style="display:block;height:3px;width:25px" class="p"></i><i style="display:block;height:3px;width:57px" class="h"></i><i style="display:block;height:3px;width:45px" class="k"></i></td></tr>
<tr><td><i class="fl" style="background:linear-gradient(90deg,#1a2aa0 0 50%,transparent 50%) top/100% 50% no-repeat,#e01818"></i></td><td style="text-align:left;padding-left:2px">Taiwan</td><td>tw</td><td>45</td><td>58</td><td>2.27 MB</td><td style="text-align:left"><i style="display:block;height:3px;width:9px" class="p"></i><i style="display:block;height:3px;width:11px" class="h"></i><i style="display:block;height:3px;width:46px" class="k"></i></td></tr>
<tr><td><i class="fl" style="background:linear-gradient(90deg,#1a2aa0 0 33%,#f0d000 33% 66%,#d01818 66%)"></i></td><td style="text-align:left;padding-left:2px">Romania</td><td>ro</td><td>42</td><td>44</td><td>969.47 KB</td><td style="text-align:left"><i style="display:block;height:3px;width:8px" class="p"></i><i style="display:block;height:3px;width:8px" class="h"></i><i style="display:block;height:3px;width:19px" class="k"></i></td></tr>
<tr><td><i class="fl" style="background:linear-gradient(#c81e2a 0 33%,#fff 33% 66%,#22449a 66%)"></i></td><td style="text-align:left;padding-left:2px">Netherlands</td><td>nl</td><td>41</td><td>43</td><td>909.21 KB</td><td style="text-align:left"><i style="display:block;height:3px;width:8px" class="p"></i><i style="display:block;height:3px;width:8px" class="h"></i><i style="display:block;height:3px;width:18px" class="k"></i></td></tr>
<tr><td><i class="fl" style="background:linear-gradient(#d22 0 33%,#1a8a3a 33% 66%,#1a2aa0 66%)"></i></td><td style="text-align:left;padding-left:2px">South Africa</td><td>za</td><td>23</td><td>69</td><td>5.60 MB</td><td style="text-align:left"><i style="display:block;height:3px;width:4px" class="p"></i><i style="display:block;height:3px;width:13px" class="h"></i><i style="display:block;height:3px;width:113px" class="k"></i></td></tr>
<tr><td><i class="fl" style="background:radial-gradient(circle,#c33 0 2px,#36a 2px 3px,#fff 3px)"></i></td><td style="text-align:left;padding-left:2px">South Korea</td><td>kr</td><td>21</td><td>21</td><td>306.86 KB</td><td style="text-align:left"><i style="display:block;height:3px;width:4px" class="p"></i><i style="display:block;height:3px;width:4px" class="h"></i><i style="display:block;height:3px;width:6px" class="k"></i></td></tr>
<tr><td><i class="fl" style="background:radial-gradient(circle,#d11 0 3px,#fff 3px)"></i></td><td style="text-align:left;padding-left:2px">Japan</td><td>jp</td><td>20</td><td>20</td><td>307.58 KB</td><td style="text-align:left"><i style="display:block;height:3px;width:4px" class="p"></i><i style="display:block;height:3px;width:4px" class="h"></i><i style="display:block;height:3px;width:6px" class="k"></i></td></tr>
<tr><td><i class="fl" style="background:linear-gradient(#d11 0 33%,#fff 33% 66%,#d11 66%)"></i></td><td style="text-align:left;padding-left:2px">Austria</td><td>at</td><td>20</td><td>20</td><td>289.17 KB</td><td style="text-align:left"><i style="display:block;height:3px;width:4px" class="p"></i><i style="display:block;height:3px;width:4px" class="h"></i><i style="display:block;height:3px;width:6px" class="k"></i></td></tr>
<tr><td><i class="fl" style="background:linear-gradient(#111 0 33%,#d11 33% 66%,#f0c800 66%)"></i></td><td style="text-align:left;padding-left:2px">Germany</td><td>de</td><td>15</td><td>34</td><td>1.98 MB</td><td style="text-align:left"><i style="display:block;height:3px;width:3px" class="p"></i><i style="display:block;height:3px;width:7px" class="h"></i><i style="display:block;height:3px;width:40px" class="k"></i></td></tr>
<tr><td><i class="fl" style="background:linear-gradient(90deg,#1a8a3a 0 33%,#d11 33% 66%,#f0d000 66%)"></i></td><td style="text-align:left;padding-left:2px">Cameroon</td><td>cm</td><td>13</td><td>41</td><td>3.72 MB</td><td style="text-align:left"><i style="display:block;height:3px;width:3px" class="p"></i><i style="display:block;height:3px;width:8px" class="h"></i><i style="display:block;height:3px;width:75px" class="k"></i></td></tr>
<tr><td><i class="fl" style="background:conic-gradient(#d11 0 25%,#1a3aa0 25% 50%,#d11 50% 75%,#1a3aa0 75%)"></i></td><td style="text-align:left;padding-left:2px">Dominican Republic</td><td>do</td><td>10</td><td>10</td><td>133.75 KB</td><td style="text-align:left"><i style="display:block;height:3px;width:2px" class="p"></i><i style="display:block;height:3px;width:2px" class="h"></i><i style="display:block;height:3px;width:3px" class="k"></i></td></tr>
<tr><td><i class="fl" style="background:linear-gradient(#2a5ab0 0 40%,#f0d000 40% 60%,#2a5ab0 60%)"></i></td><td style="text-align:left;padding-left:2px">Sweden</td><td>se</td><td>9</td><td>26</td><td>1.90 MB</td><td style="text-align:left"><i style="display:block;height:3px;width:2px" class="p"></i><i style="display:block;height:3px;width:5px" class="h"></i><i style="display:block;height:3px;width:38px" class="k"></i></td></tr>
<tr><td><i class="fl" style="background:#2a44b0"></i></td><td style="text-align:left;padding-left:2px">European country</td><td>eu</td><td>7</td><td>22</td><td>1.86 MB</td><td style="text-align:left"><i style="display:block;height:3px;width:1px" class="p"></i><i style="display:block;height:3px;width:4px" class="h"></i><i style="display:block;height:3px;width:37px" class="k"></i></td></tr>
<tr><td><i class="fl" style="background:linear-gradient(90deg,#d11 0 30%,transparent 30%),linear-gradient(#1a8a3a 0 33%,#fff 33% 66%,#111 66%)"></i></td><td style="text-align:left;padding-left:2px">United Arab Emirates</td><td>ae</td><td>6</td><td>20</td><td>1.86 MB</td><td style="text-align:left"><i style="display:block;height:3px;width:1px" class="p"></i><i style="display:block;height:3px;width:4px" class="h"></i><i style="display:block;height:3px;width:37px" class="k"></i></td></tr>
<tr><td><i class="fl" style="background:linear-gradient(#fff 0 33%,#2a3ab0 33% 66%,#d11 66%)"></i></td><td style="text-align:left;padding-left:2px">Russian Federation</td><td>ru</td><td>4</td><td>4</td><td>33.65 KB</td><td style="text-align:left"><i style="display:block;height:3px;width:1px" class="p"></i><i style="display:block;height:3px;width:1px" class="h"></i><i style="display:block;height:3px;width:1px" class="k"></i></td></tr>
<tr><td><i class="fl" style="background:linear-gradient(#8a2a2a 0 40%,#fff 40% 60%,#8a2a2a 60%)"></i></td><td style="text-align:left;padding-left:2px">Latvia</td><td>lv</td><td>1</td><td>1</td><td>8.43 KB</td><td style="text-align:left"><i style="display:block;height:3px;width:1px" class="p"></i><i style="display:block;height:3px;width:1px" class="h"></i><i style="display:block;height:3px;width:1px" class="k"></i></td></tr>
<tr><td><i class="fl" style="background:linear-gradient(#d11 0 17%,#fff 17% 33%,#2a2a90 33% 67%,#fff 67% 83%,#d11 83%)"></i></td><td style="text-align:left;padding-left:2px">Thailand</td><td>th</td><td>1</td><td>1</td><td>16.31 KB</td><td style="text-align:left"><i style="display:block;height:3px;width:1px" class="p"></i><i style="display:block;height:3px;width:1px" class="h"></i><i style="display:block;height:3px;width:1px" class="k"></i></td></tr>
<tr><td></td><td colspan="2" style="text-align:left;padding-left:2px;color:#9a9ac8">Others</td><td>0</td><td>0</td><td>0</td><td></td></tr>
</table>
</body></html>
